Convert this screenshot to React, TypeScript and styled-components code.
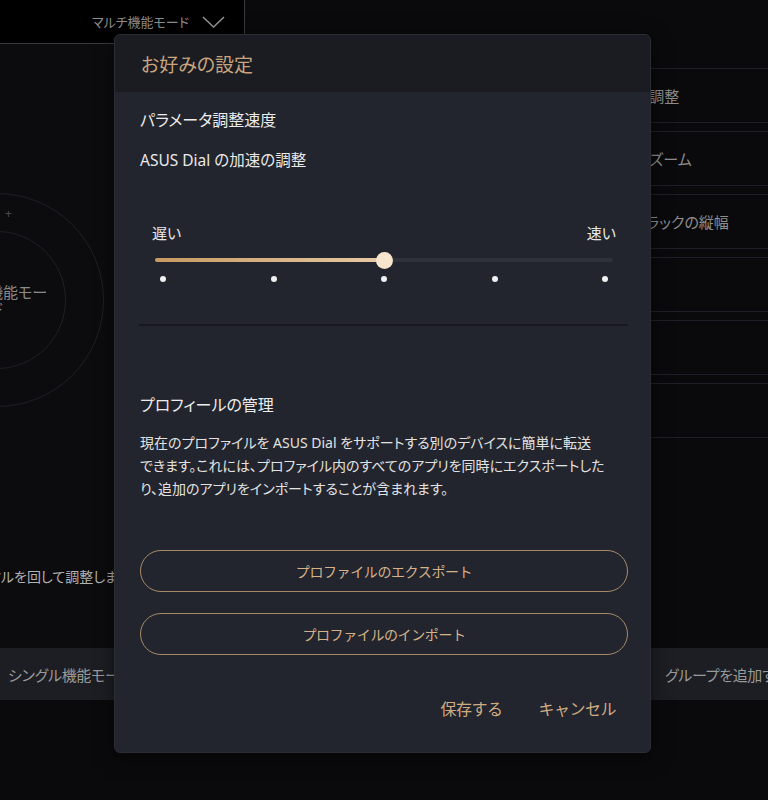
import { useState } from 'react';
import styled, { createGlobalStyle } from 'styled-components';

const GlobalStyle = createGlobalStyle`
  body {
    margin: 0;
    background: #0a0a0c;
    font-family: "Noto Sans", "Noto Sans CJK JP", sans-serif;
    font-feature-settings: "palt" 1;
    -webkit-font-smoothing: antialiased;
  }
`;

const Page = styled.div`
  position: relative;
  width: 768px;
  height: 800px;
  overflow: hidden;
  background: #0a0a0c;
  display: flex;
  flex-direction: column;
`;

const Workspace = styled.div`
  display: grid;
  grid-template-columns: 245px 1fr;
  height: 648px;
`;

const LeftPane = styled.div`
  display: flex;
  flex-direction: column;
  background: #0c0c0f;
`;

const ModeBar = styled.div`
  height: 44px;
  box-sizing: border-box;
  background: #000;
  border-bottom: 1px solid #3a3a3c;
  border-right: 1px solid #3a3a3c;
  display: flex;
  align-items: center;
  justify-content: flex-end;
  gap: 13px;
  padding-right: 19px;
  color: #8e8e8e;
  font-size: 13px;
`;

const DialArea = styled.div`
  display: flex;
  flex-direction: column;
`;

const Dial = styled.div`
  position: relative;
  width: 214px;
  height: 214px;
  margin: 149px 0 0 -110px;
  border: 1px solid #1f2024;
  border-radius: 50%;
  box-sizing: border-box;
  display: flex;
  align-items: center;
  justify-content: center;
`;

const InnerRing = styled.div`
  width: 138px;
  height: 138px;
  border: 1px solid #1f2024;
  border-radius: 50%;
  box-sizing: border-box;
  display: flex;
  align-items: center;
  justify-content: center;
`;

const DialLabel = styled.div`
  width: 106px;
  text-align: center;
  color: #8a8a8a;
  font-size: 15px;
  line-height: 16px;
`;

const Tick = styled.span`
  position: absolute;
  left: 114px;
  top: 14px;
  color: #4a4b50;
  font-size: 12px;
  line-height: 12px;
`;

const Hint = styled.div`
  margin: 159px 0 0 -37px;
  color: #b2b2b2;
  font-size: 14px;
  white-space: nowrap;
`;

const RightPane = styled.div`
  display: flex;
  flex-direction: column;
  gap: 8px;
  padding-top: 68px;
`;

const ListRow = styled.div<{ $indent?: number }>`
  height: 55px;
  box-sizing: border-box;
  border-top: 1px solid #1d2026;
  border-bottom: 1px solid #1d2026;
  display: flex;
  align-items: center;
  padding-left: ${(p) => p.$indent ?? 345}px;
  color: #8d8d8d;
  font-size: 15px;
  white-space: nowrap;
`;

const BottomBar = styled.div`
  height: 52px;
  display: flex;
  justify-content: space-between;
`;

const BottomTab = styled.div<{ $width: number; $pad: number }>`
  width: ${(p) => p.$width}px;
  box-sizing: border-box;
  padding-left: ${(p) => p.$pad}px;
  background: #1c1e23;
  color: #9a9a9a;
  font-size: 15px;
  letter-spacing: -0.3px;
  display: flex;
  align-items: center;
  white-space: nowrap;
  overflow: hidden;
`;

const Modal = styled.div`
  position: absolute;
  left: 114px;
  top: 34px;
  width: 537px;
  height: 719px;
  box-sizing: border-box;
  background: #22252d;
  border: 1px solid #2a2d35;
  border-radius: 6px;
  overflow: hidden;
  display: flex;
  flex-direction: column;
  box-shadow: 0 4px 20px rgba(0, 0, 0, 0.5);
`;

const ModalHeader = styled.div`
  height: 57px;
  flex-shrink: 0;
  background: #1a1c22;
  display: flex;
  align-items: center;
  padding-left: 26px;
  color: #c9a57f;
  font-size: 19px;
`;

const ModalBody = styled.div`
  display: flex;
  flex-direction: column;
  padding: 0 22px 0 25px;
  color: #e8e8e8;
`;

const SectionTitle = styled.div<{ $top: number }>`
  margin-top: ${(p) => p.$top}px;
  font-size: 16px;
  line-height: 24px;
  color: #ececec;
`;

const SubLabel = styled.div`
  margin-top: 17px;
  font-size: 15.5px;
  line-height: 22px;
`;

const SpeedLabels = styled.div`
  margin-top: 51px;
  padding: 0 12px;
  display: flex;
  justify-content: space-between;
  font-size: 15px;
  line-height: 22px;
`;

const TrackWrap = styled.div`
  margin-top: 8px;
  padding: 0 15px;
  height: 16px;
  display: flex;
  align-items: center;
`;

const Track = styled.div`
  position: relative;
  flex: 1;
  height: 4px;
  border-radius: 2px;
  background: #2f3239;
`;

const TrackFill = styled.div`
  height: 100%;
  border-radius: 2px;
  background: linear-gradient(90deg, #c69a60, #e8caa6);
`;

const Thumb = styled.div`
  position: absolute;
  top: 50%;
  width: 17px;
  height: 17px;
  margin: -8.5px 0 0 -8.5px;
  border-radius: 50%;
  background: #f8e5ce;
`;

const Dots = styled.div`
  margin-top: 8px;
  padding: 0 20px;
  display: flex;
  justify-content: space-between;
`;

const Dot = styled.span`
  width: 6px;
  height: 6px;
  border-radius: 50%;
  background: #f0f0f0;
`;

const Divider = styled.div`
  margin: 42px 0 0 -1px;
  height: 2px;
  background: #17191e;
`;

const Paragraph = styled.p`
  margin: 14px 0 0;
  font-size: 14px;
  line-height: 23px;
  white-space: nowrap;
  color: #e2e2e2;
`;

const OutlineButton = styled.button<{ $top: number }>`
  margin-top: ${(p) => p.$top}px;
  height: 42px;
  border: 1.5px solid #a68a68;
  border-radius: 21px;
  background: transparent;
  color: #d6b28a;
  font-family: inherit;
  font-size: 14px;
  letter-spacing: -0.4px;
  cursor: pointer;
`;

const Footer = styled.div`
  margin-top: 42px;
  padding-right: 12px;
  display: flex;
  justify-content: flex-end;
  gap: 36px;
`;

const TextButton = styled.button`
  padding: 0;
  border: none;
  background: none;
  color: #d0ab82;
  font-family: inherit;
  font-size: 16px;
  letter-spacing: -0.5px;
  line-height: 24px;
  cursor: pointer;
`;

const Chevron = () => (
  <svg width="23" height="12" viewBox="0 0 23 12">
    <polyline points="1,1 11.5,11 22,1" fill="none" stroke="#9a9a9a" strokeWidth="1.4" />
  </svg>
);

const STEPS = 5;

export default function App() {
  const [speed] = useState(2);
  const pct = (speed / (STEPS - 1)) * 100;

  return (
    <Page>
      <GlobalStyle />
      <Workspace>
        <LeftPane>
          <ModeBar>
            マルチ機能モード
            <Chevron />
          </ModeBar>
          <DialArea>
            <Dial>
              <Tick>+</Tick>
              <InnerRing>
                <DialLabel>マルチ機能モード</DialLabel>
              </InnerRing>
            </Dial>
            <Hint>ダイヤルを回して調整します</Hint>
          </DialArea>
        </LeftPane>
        <RightPane>
          <ListRow $indent={350}>ブラシの調整</ListRow>
          <ListRow $indent={326}>タイムラインズーム</ListRow>
          <ListRow $indent={348}>ビデオトラックの縦幅</ListRow>
          <ListRow />
          <ListRow />
          <ListRow />
        </RightPane>
      </Workspace>
      <BottomBar>
        <BottomTab $width={245} $pad={8}>シングル機能モード</BottomTab>
        <BottomTab $width={128} $pad={25}>グループを追加する</BottomTab>
      </BottomBar>

      <Modal>
        <ModalHeader>お好みの設定</ModalHeader>
        <ModalBody>
          <SectionTitle $top={16}>パラメータ調整速度</SectionTitle>
          <SubLabel>ASUS Dial の加速の調整</SubLabel>
          <SpeedLabels>
            <span>遅い</span>
            <span>速い</span>
          </SpeedLabels>
          <TrackWrap>
            <Track>
              <TrackFill style={{ width: `${pct}%` }} />
              <Thumb style={{ left: `${pct}%` }} />
            </Track>
          </TrackWrap>
          <Dots>
            {Array.from({ length: STEPS }).map((_, i) => (
              <Dot key={i} />
            ))}
          </Dots>
          <Divider />
          <SectionTitle $top={67}>プロフィールの管理</SectionTitle>
          <Paragraph>
            現在のプロファイルを ASUS Dial をサポートする別のデバイスに簡単に転送
            <br />
            できます。これには、プロファイル内のすべてのアプリを同時にエクスポートした
            <br />
            り、追加のアプリをインポートすることが含まれます。
          </Paragraph>
          <OutlineButton $top={50}>プロファイルのエクスポート</OutlineButton>
          <OutlineButton $top={21}>プロファイルのインポート</OutlineButton>
          <Footer>
            <TextButton>保存する</TextButton>
            <TextButton>キャンセル</TextButton>
          </Footer>
        </ModalBody>
      </Modal>
    </Page>
  );
}
